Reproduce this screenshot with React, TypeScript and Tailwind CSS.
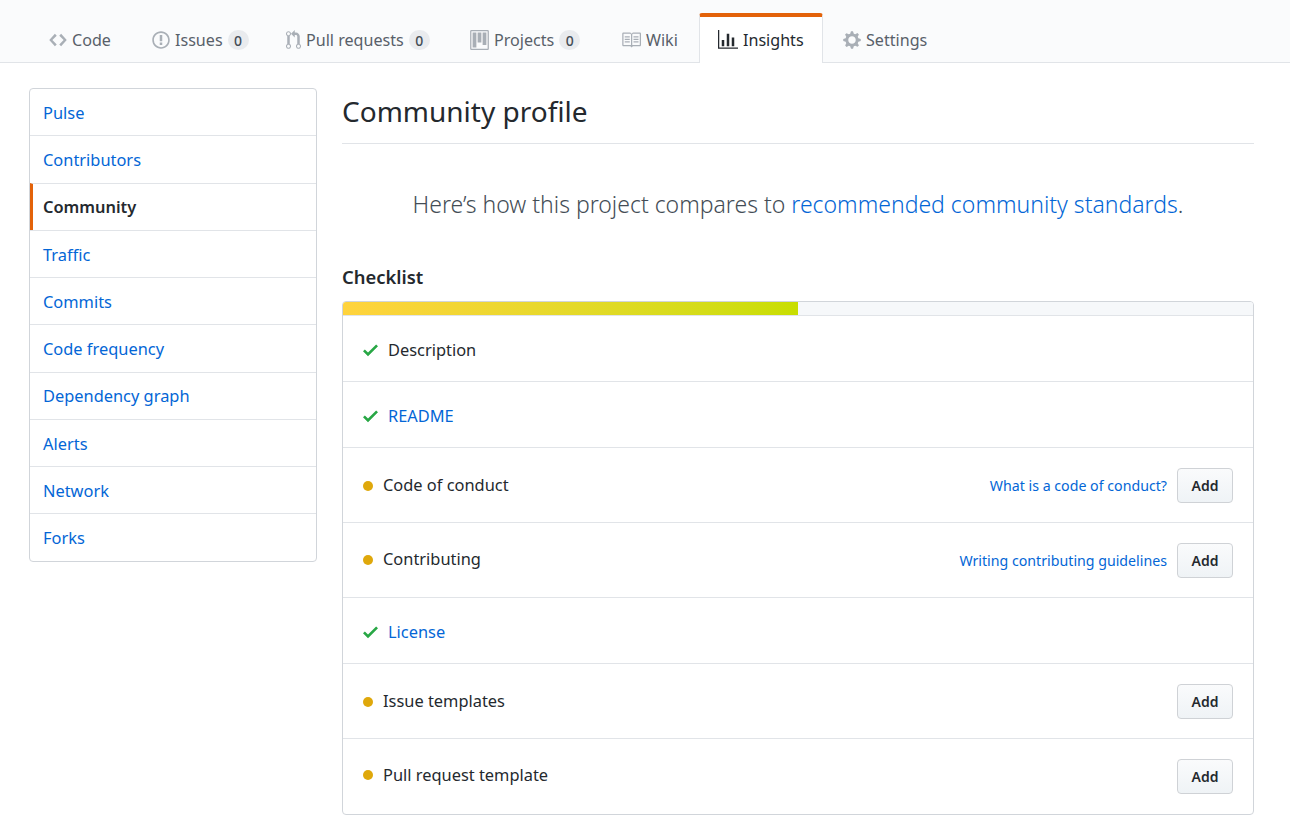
import React from "react";

const ff = "font-['Noto_Sans','Liberation_Sans',sans-serif]";

const icons: Record<string, { vb: string; w: number; d: string }> = {
  code: { vb: "0 0 14 16", w: 18, d: "M9.5 3L8 4.5 11.5 8 8 11.5 9.5 13 14 8 9.5 3zm-5 0L0 8l4.5 5L6 11.5 2.5 8 6 4.5 4.5 3z" },
  issue: { vb: "0 0 14 16", w: 18, d: "M7 2.3c3.14 0 5.7 2.56 5.7 5.7s-2.56 5.7-5.7 5.7A5.71 5.71 0 0 1 1.3 8c0-3.14 2.56-5.7 5.7-5.7zM7 1C3.14 1 0 4.14 0 8s3.14 7 7 7 7-3.14 7-7-3.14-7-7-7zm1 3H6v5h2V4zm0 6H6v2h2v-2z" },
  pull: { vb: "0 0 12 16", w: 15, d: "M11 11.28V5c-.03-.78-.34-1.47-.94-2.06C9.46 2.35 8.78 2.03 8 2H7V0L4 3l3 3V4h1c.27.02.48.11.69.31.21.2.3.42.31.69v6.28A1.993 1.993 0 0 0 10 15a1.993 1.993 0 0 0 1-3.72zm-1 2.92c-.66 0-1.2-.55-1.2-1.2 0-.65.55-1.2 1.2-1.2.65 0 1.2.55 1.2 1.2 0 .65-.55 1.2-1.2 1.2zM4 3c0-1.11-.89-2-2-2a1.993 1.993 0 0 0-1 3.72v6.56A1.993 1.993 0 0 0 2 15a1.993 1.993 0 0 0 1-3.72V4.72c.59-.34 1-.98 1-1.72zm-.8 10c0 .66-.55 1.2-1.2 1.2-.65 0-1.2-.55-1.2-1.2 0-.65.55-1.2 1.2-1.2.65 0 1.2.55 1.2 1.2zM2 4.2C1.34 4.2.8 3.65.8 3c0-.65.55-1.2 1.2-1.2.65 0 1.2.55 1.2 1.2 0 .65-.55 1.2-1.2 1.2z" },
  project: { vb: "0 0 15 16", w: 19, d: "M10 12h3V2h-3v10zm-4-2h3V2H6v8zm-4 4h3V2H2v12zm-1 1h13V1H1v14zM14 0H1a1 1 0 0 0-1 1v14a1 1 0 0 0 1 1h13a1 1 0 0 0 1-1V1a1 1 0 0 0-1-1z" },
  book: { vb: "0 0 16 16", w: 20, d: "M3 5h4v1H3V5zm0 3h4V7H3v1zm0 2h4V9H3v1zm11-5h-4v1h4V5zm0 2h-4v1h4V7zm0 2h-4v1h4V9zm2-6v9c0 .55-.45 1-1 1H9.5l-1 1-1-1H2c-.55 0-1-.45-1-1V3c0-.55.45-1 1-1h5.5l1 1 1-1H15c.55 0 1 .45 1 1zm-8 .5L7.5 3H2v9h6V3.5zm7-.5H9.5l-.5.5V12h6V3z" },
  graph: { vb: "0 0 16 16", w: 20, d: "M16 14v1H0V0h1v14h15zM5 13H3V8h2v5zm4 0H7V3h2v10zm4 0h-2V6h2v7z" },
  gear: { vb: "0 0 14 16", w: 18, d: "M14 8.77v-1.6l-1.94-.64-.45-1.09.88-1.84-1.13-1.13-1.81.91-1.09-.45-.69-1.92h-1.6l-.63 1.94-1.11.45-1.84-.88-1.13 1.13.91 1.81-.45 1.09L0 7.23v1.59l1.94.64.45 1.09-.88 1.84 1.13 1.13 1.81-.91 1.09.45.69 1.92h1.59l.63-1.94 1.11-.45 1.84.88 1.13-1.13-.92-1.81.47-1.09L14 8.75v.02zM7 11c-1.66 0-3-1.34-3-3s1.34-3 3-3 3 1.34 3 3-1.34 3-3 3z" },
  check: { vb: "0 0 12 16", w: 15, d: "M12 5l-8 8-4-4 1.5-1.5L4 10l6.5-6.5L12 5z" },
};

function Icon({ name, className }: { name: string; className: string }) {
  const i = icons[name];
  return (
    <svg viewBox={i.vb} width={i.w} height={20} className={className} fill="currentColor">
      <path fillRule="evenodd" d={i.d} />
    </svg>
  );
}

const tabs = [
  { label: "Code", icon: "code", w: "w-[103px]" },
  { label: "Issues", icon: "issue", count: "0", w: "w-[134px]" },
  { label: "Pull requests", icon: "pull", count: "0", w: "w-[184px]" },
  { label: "Projects", icon: "project", count: "0", w: "w-[151px]" },
  { label: "Wiki", icon: "book", w: "w-[98px]" },
];

const sideItems = ["Pulse", "Contributors", "Community", "Traffic", "Commits", "Code frequency", "Dependency graph", "Alerts", "Network", "Forks"];

const checklist = [
  { label: "Description", done: true, h: "h-[66px] pt-[4px]" },
  { label: "README", done: true, link: true, h: "h-[66px] pt-[4px]" },
  { label: "Code of conduct", help: "What is a code of conduct?", add: true, h: "h-[75px] pt-[2px]" },
  { label: "Contributing", help: "Writing contributing guidelines", add: true, h: "h-[75px] pt-[2px]", up: true },
  { label: "License", done: true, link: true, h: "h-[66px] pt-[4px]" },
  { label: "Issue templates", add: true, h: "h-[75px] pt-[2px]" },
  { label: "Pull request template", add: true, h: "h-[76px]", up: true },
];

export default function App() {
  return (
    <div className={`${ff} h-[830px] w-[1290px] overflow-hidden bg-white text-[16.4px] text-[#24292e]`}>
      <div className="flex h-[63px] items-end border-b border-[#e1e4e8] bg-[#fafbfc] pl-[29px] text-[16.1px]">
        {tabs.map((t) => (
          <div key={t.label} className={`${t.w} flex h-[50px] items-center gap-[5px] pl-[20px] pt-[6px] text-[#586069]`}>
            <Icon name={t.icon} className="text-[#a9afb6]" />
            <span>{t.label}</span>
            {t.count && (
              <span className="flex h-[20px] w-[21px] items-center justify-center rounded-full bg-[#e9ebee] text-[14px] font-medium text-[#444d56]">
                {t.count}
              </span>
            )}
          </div>
        ))}
        <div className="-mb-px flex h-[50px] w-[124px] items-center gap-[5px] rounded-t-[3px] border-x border-t-[4px] border-x-[#e1e4e8] border-t-[#e36209] bg-white pl-[18px] text-[#24292e]">
          <Icon name="graph" className="text-[#24292e]" />
          <span>Insights</span>
        </div>
        <div className="flex h-[50px] items-center gap-[5px] pl-[20px] pt-[6px] text-[#586069]">
          <Icon name="gear" className="text-[#a9afb6]" />
          <span>Settings</span>
        </div>
      </div>

      <div className="flex gap-[25px] pl-[29px] pt-[25px]">
        <div className="h-[474px] w-[288px] overflow-hidden rounded-[4px] border border-[#d1d5da]">
          {sideItems.map((s, idx) => {
            const active = s === "Community";
            return (
              <div
                key={s}
                className={`flex items-center pt-[2px] ${idx > 0 ? "h-[47.25px] border-t border-[#e1e4e8]" : "h-[46.4px]"} ${
                  active ? "border-l-[3px] border-l-[#e36209] pl-[10px] font-semibold text-[#24292e]" : "pl-[13px] text-[#0366d6]"
                }`}
              >
                {s}
              </div>
            );
          })}
        </div>

        <div className="w-[912px]">
          <h1 className="flex h-[56px] items-center border-b border-[#e1e4e8] pb-[10px] text-[28px] font-normal">Community profile</h1>
          <p className="mt-[43px] text-center text-[23px] font-light text-[#444d56]">
            Here’s how this project compares to <span className="text-[#0366d6]">recommended community standards</span>.
          </p>
          <h2 className="mt-[41px] h-[27px] text-[18.4px] font-semibold">Checklist</h2>
          <div className="mt-[11px] overflow-hidden rounded-[4px] border border-[#d1d5da]">
            <div className="h-[13px] bg-[#f6f8fa]">
              <div className="h-full w-1/2 bg-gradient-to-r from-[#ffd33d] to-[#c8de00]" />
            </div>
            {checklist.map((c) => (
              <div key={c.label} className={`flex ${c.h} items-center border-t border-[#e1e4e8] pl-[20px] pr-[20px]`}>
                {c.done ? (
                  <Icon name="check" className="mr-[10px] text-[#28a745]" />
                ) : (
                  <span className={`mr-[10px] h-[10px] w-[10px] rounded-full bg-[#dfa80b] ${c.up ? "mb-[2px]" : ""}`} />
                )}
                <span className={`${c.link ? "text-[#0366d6]" : ""} ${c.up ? "mb-[2px]" : ""}`}>{c.label}</span>
                {c.add && (
                  <div className="ml-auto flex items-center gap-[10px]">
                    {c.help && <span className="text-[14.2px] text-[#0366d6]">{c.help}</span>}
                    <button className="h-[35px] w-[56px] rounded-[4px] border border-[#cfd2d6] bg-gradient-to-b from-[#fafbfc] to-[#eff3f6] text-[14px] font-semibold">
                      Add
                    </button>
                  </div>
                )}
              </div>
            ))}
          </div>
        </div>
      </div>
    </div>
  );
}
